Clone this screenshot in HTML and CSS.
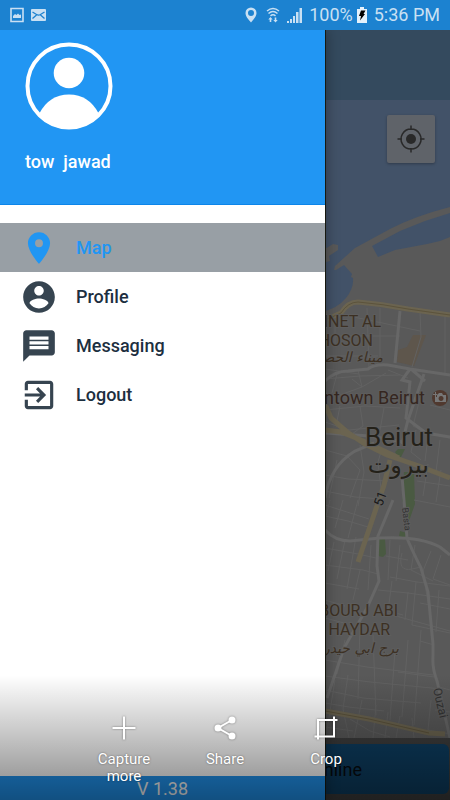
FILE: index.html
```
<!DOCTYPE html>
<html lang="en">
<head>
    <meta charset="UTF-8">
    <meta name="viewport" content="width=device-width, initial-scale=1.0">
    <title>Map</title>
    <link rel="stylesheet" href="styles.css">
</head>
<body>
    <header class="status-bar">
        <div class="status-group">
            <svg width="14" height="16" viewBox="0 0 14 16"><path fill="none" stroke="currentColor" stroke-width="1.6" d="M1 1.500h12v13H1z"/><path fill="currentColor" d="M3 11V9l2-2 1.500 1L8 6.500l1.500 1.500L11 7.500V11z"/></svg>
            <svg width="15" height="12" viewBox="0 0 15 12"><rect width="15" height="12" rx="1" fill="currentColor"/><path fill="none" stroke="#1c82d0" stroke-width="1.300" d="M1.500 3l4 2.500q2 1.200 4 0l4-2.500M1.500 9.500l4-3.500M13.500 9.500l-4-3.500"/></svg>
        </div>
        <div class="status-group">
            <svg width="12" height="16" viewBox="0 0 12 16"><path fill="currentColor" fill-rule="evenodd" d="M6 .5A5.500 5.500 0 0 0 .5 6c0 3.500 3 6.500 5.500 9.500C8.500 12.500 11.500 9.500 11.500 6A5.500 5.500 0 0 0 6 .5zM6 3a3 3 0 1 1 0 6 3 3 0 0 1 0-6z"/></svg>
            <svg class="wifi" width="14" height="16" viewBox="0 0 14 16"><path fill="none" stroke="currentColor" stroke-width="1.500" d="M1 4q6-5 12 0M2.500 6.500q4.500-4 9 0M4.500 8.800q2.500-2 5 0"/><path fill="currentColor" d="M4.500 10l2.200 2.500H5.300V15H3.700v-2.500H2.300zM9.500 15.500L7.300 13h1.400v-2.500h1.600V13h1.400z"/></svg>
            <svg width="15" height="16" viewBox="0 0 15 16"><path fill="currentColor" d="M0 14h2v2H0zM3 12h2v4H3zM6 9h2v7H6zM9 5h2.500v11H9zM12.500 1H15v15h-2.500z"/></svg>
            <span class="battery-level">100%</span>
            <svg width="10" height="16" viewBox="0 0 10 16"><path fill="#e4f1fb" d="M3 0h4v2h3v14H0V2h3z"/><path fill="#000" d="M4 3.500h4.500L6.500 7H8L3 13.500l1-4.500H2z"/></svg>
            <span class="clock">5:36 PM</span>
        </div>
    </header>

    <div class="screen">
        <main class="map-page">
            <div class="toolbar"></div>
            <div class="map">
                <svg class="map-canvas" viewBox="0 100 450 638" preserveAspectRatio="xMaxYMin slice">
                    <rect y="100" width="450" height="638" fill="#595959"/>
                    <!-- sea and harbour -->
                    <path fill="#425268" d="M0 100h450v107q-35 9-60 22l-35 19-20 18-1 4 2 0 8-5 8 9-1 3 2 1q1 10-7 20-9 11-25 14H0z"/>
                    <path fill="#425268" d="M372 246l28-15 25-10 25-8v24l-10 4-13 3-32 6-17 7z"/>
                    <path fill="#595959" d="M320 252l13-8 5 1v5l-9 6 1 5-4 1-6-6z"/>
                    <!-- parks and blocks -->
                    <path fill="#5e564c" d="M413 335h13l-12 31-17-4 1-12 9-3z"/>
                    <path fill="#4a5a42" d="M398 449h7l-5 10-5-7zM404 472h10l1 32-6 17-7-21zM378 539h7l1 15-3 3-5-1zM400 531l7 2-1 5-7-2z"/>
                    <!-- small streets -->
                    <g class="street">
                        <path d="M335 320v26M349 316l24 5 47 10M367 308l2 60M380 308v57M325 336h75M325 356h53M420 312l1 25-9 30M445 316v58M325 379l35-3 40-1"/>
                        <path d="M325 369l34 5M337 374l-5 19M352 379l10 8M358 370l4 17-22 8M362 387l24-14M388 370l20 8M325 410l40-4 35 2M340 406l-4 20 17 8M360 406l3 20-11 8M384 408l-4 22M420 398l-7 28 16 8 21 4M430 405l20 5"/>
                        <path d="M325 422l24 8 50-5M325 450l22 6 13 14-10 28M325 475l23 4 40 2M337 460l-8 38M360 445l4 27-6 34M382 448l-4 14 4 36M325 491l30 6 27 2M416 430l-5 22 10 8M428 437l-3 24M440 440l-4 32M417 481l33 5M428 464l-5 32M441 470l-5 32M414 500l36 7"/>
                        <path d="M325 516l23 5 20 6M330 500l-4 16M343 500l-8 28M358 500l-10 38M325 505l44 14M325 548l33 6 18 4M334 542l-6 29M345 540l-8 39M356 537l-9 52M325 565l38 5 15 4M325 583l34 6M360 570l-7 30M371 545l-3 45M390 540l-2 40M400 545l-4 36M386 556l22 4M390 577l27 5 33 4M402 553q-5 19 10 16l9-2M415 545l-4 25 22 11M431 551l-8 20 5 32M441 555l-8 24 17 6M378 590l30 3 42 6M392 581l-4 30 15 4M408 592l-3 28M416 582l-4 43 38 8M420 603l30 6M378 611l72 20M439 590l-3 42"/>
                        <path d="M325 600l20 6M325 618l19 5M345 640l-8 34M360 625l-2 74M373 635l3 80M395 650l-5 70M408 640l-6 77M421 630l-7 95M325 660l42 7 66 8M325 676l45 6 72 7M325 690l38 8 58 5M325 703l24 4 35 4M335 680l-8 50M348 675l-5 34 6 29M362 700l-8 38M376 705l-3 33M388 712l-3 26M400 716l-4 22M412 718l2 20M431 700l-3 30 22 4M439 687l11 3M435 710l15 2M420 641l14 4M398 672l36 5M325 727l28 4M350 719l20 12 20 6"/>
                    </g>
                    <!-- wider roads -->
                    <g class="road">
                        <path d="M400 311l-5 52M325 381q10-10 23-10l20-2q6-5 20-4l22 4 40 6M410 369l-8 11 8 2-4 36 20 15 24 4M411 369l14 12"/>
                        <path d="M424 374l-16 46-6 24M325 433l45 3 33 6M325 498q5-32 30-47l19-8M393 500l-15 36-1 30 2 15-12 27-23 40-17 50"/>
                        <path d="M402 476l5 62q3 8 14 30l7 24 5 52v12q-1 12 4 25l13 57"/>
                        <path d="M325 530q10 11 25 11l30-3q40-2 60 9l10 8"/>
                    </g>
                    <!-- highways -->
                    <g class="highway">
                        <path d="M325 320l16-7q7-11 17-11 25 2 50 7l42 6"/>
                        <path d="M325 404l6 14 16 14 18 12 22 11 32 11 31 12M325 430l16 2 20 8 38 18M390 460l-6 25-26 77"/>
                        <path d="M325 711l44 8 60 14 16 1"/>
                    </g>
                    <path class="highway-line" d="M325 320l16-7q7-11 17-11 25 2 50 7l42 6M325 711l44 8 60 14"/>
                    <!-- labels -->
                    <g class="area-label">
                        <text x="381" y="327">MINET AL</text>
                        <text x="373" y="346">HOSON</text>
                        <text class="arabic" x="383" y="362">ميناء الحصن</text>
                        <text x="398" y="616">BOURJ ABI</text>
                        <text x="390" y="635">HAYDAR</text>
                        <text class="arabic" x="399" y="653">برج ابي حيدر</text>
                    </g>
                    <text class="poi-label" x="425" y="404">Downtown Beirut</text>
                    <circle cx="440" cy="398" r="8" fill="#50392f"/>
                    <path fill="#777" fill-rule="evenodd" d="M437 395l2-2h3l1 2h3v7h-11v-5h2zM441 396a2.500 2.500 0 1 0 .1 0zM435 392h1v2h2v1h-2v2h-1v-2h-2v-1h2z"/>
                    <text class="city-label" x="433" y="446">Beirut</text>
                    <text class="city-label city-arabic" x="429" y="473">بيروت</text>
                    <text class="road-number" transform="translate(382 507) rotate(-70)">51</text>
                    <text class="street-label" transform="translate(402 508) rotate(83)">Basta</text>
                    <text class="street-label street-large" transform="translate(433 689) rotate(77)">Ouzai</text>
                </svg>
                <button class="locate-btn" aria-label="My location">
                    <svg width="28" height="28" viewBox="0 0 28 28"><circle cx="14" cy="14" r="5" fill="#292929"/><path fill="none" stroke="#292929" stroke-width="1.500" d="M14 4a10 10 0 1 0 .1 0M14 .5V5M14 23v4.500M.5 14H5M23 14h4.500"/></svg>
                </button>
            </div>
            <div class="online-bar">
                <button class="online-btn">Online</button>
            </div>
        </main>

        <aside class="drawer">
            <div class="profile">
                <svg class="avatar" viewBox="0 0 88 88">
                    <circle cx="44" cy="44" r="41.500" fill="none" stroke="#fff" stroke-width="4"/>
                    <circle cx="44" cy="31" r="15.300" fill="#fff"/>
                    <path fill="#fff" d="M14 72Q24 52.500 44 52.500T74 72Q62 87 44 87T14 72z"/>
                </svg>
                <div class="user-name">tow&nbsp; jawad</div>
            </div>
            <nav class="menu">
                <a class="menu-item active" href="#map">
                    <svg class="menu-icon" viewBox="0 0 24 24"><path d="M12 2C8.130 2 5 5.130 5 9c0 5.250 7 13 7 13s7-7.750 7-13c0-3.870-3.130-7-7-7zm0 9.500a2.500 2.500 0 1 1 0-5 2.500 2.500 0 0 1 0 5z"/></svg>
                    Map
                </a>
                <a class="menu-item" href="#profile">
                    <svg class="menu-icon" viewBox="0 0 24 24"><path d="M12 2C6.480 2 2 6.480 2 12s4.480 10 10 10 10-4.480 10-10S17.520 2 12 2zm0 3c1.660 0 3 1.340 3 3s-1.340 3-3 3-3-1.340-3-3 1.340-3 3-3zm0 14.200c-2.500 0-4.710-1.280-6-3.220.030-1.990 4-3.080 6-3.080 1.990 0 5.970 1.090 6 3.080-1.290 1.940-3.500 3.220-6 3.220z"/></svg>
                    Profile
                </a>
                <a class="menu-item" href="#messaging">
                    <svg class="menu-icon" viewBox="0 0 24 24"><path d="M20 2H4c-1.100 0-1.990.9-1.990 2L2 22l4-4h14c1.100 0 2-.9 2-2V4c0-1.100-.9-2-2-2zM6 9h12v2H6V9zm12 5H6v-2h12v2zm0-6H6V6h12v2z"/></svg>
                    Messaging
                </a>
                <a class="menu-item" href="#logout">
                    <svg class="menu-icon" viewBox="0 0 24 24"><path d="M10.090 15.590L11.500 17l5-5-5-5-1.410 1.410L12.670 11H3v2h9.670l-2.580 2.590zM19 3H5c-1.110 0-2 .9-2 2v4h2V5h14v14H5v-4H3v4c0 1.100.89 2 2 2h14c1.100 0 2-.9 2-2V5c0-1.100-.9-2-2-2z"/></svg>
                    Logout
                </a>
            </nav>
            <footer class="version">V 1.38</footer>
        </aside>

        <div class="capture-bar">
            <button class="capture-action">
                <svg width="26" height="26" viewBox="0 0 26 26"><path d="M13 1.500v23M1.500 13h23"/></svg>
                <span>Capture more</span>
            </button>
            <button class="capture-action">
                <svg width="26" height="26" viewBox="0 0 26 26"><path d="M20 5L6 13l14 8"/><g fill="#fff" stroke="none"><circle cx="20" cy="5" r="3.500"/><circle cx="6" cy="13" r="3.500"/><circle cx="20" cy="21" r="3.500"/></g></svg>
                <span>Share</span>
            </button>
            <button class="capture-action">
                <svg width="26" height="26" viewBox="0 0 26 26"><path d="M5 24.500V5h19.500M1.500 21.500H21V1.500"/></svg>
                <span>Crop</span>
            </button>
        </div>
    </div>
</body>
</html>
```
FILE: styles.css
```
* {
    box-sizing: border-box;
}
body {
    margin: 0;
    min-height: 100vh;
    display: flex;
    flex-direction: column;
    font-family: Roboto, sans-serif;
    background-color: #3d3d3d;
}
button {
    font-family: inherit;
    border: none;
    padding: 0;
    cursor: pointer;
}
svg {
    display: block;
    flex-shrink: 0;
}

/* status bar */
.status-bar {
    display: flex;
    justify-content: space-between;
    align-items: center;
    height: 30px;
    padding: 0 10px;
    background-color: #1c82d0;
    color: #c9e0f3;
}
.status-group {
    display: flex;
    align-items: center;
    gap: 7px;
}
.status-group .wifi {
    margin-left: 2px;
}
.battery-level,
.clock {
    font-size: 18px;
    line-height: 30px;
}
.battery-level {
    margin-right: -3px;
}

/* map page behind the drawer */
.screen {
    position: relative;
    flex: 1;
    display: flex;
    overflow: hidden;
}
.map-page {
    flex: 1;
    display: flex;
    flex-direction: column;
}
.toolbar {
    height: 70px;
    background-color: #344a5e;
}
.map {
    position: relative;
    flex: 1;
    overflow: hidden;
}
.map-canvas {
    position: absolute;
    width: 100%;
    height: 100%;
}
.street,
.road,
.highway,
.highway-line {
    fill: none;
    stroke: #626262;
    stroke-width: 1;
}
.road {
    stroke: #676767;
    stroke-width: 3;
}
.highway {
    stroke: #6b6450;
    stroke-width: 5;
}
.highway-line {
    stroke: #5c533b;
}
.map-canvas text {
    text-anchor: end;
    paint-order: stroke;
    stroke: #5d5d5d;
    stroke-width: 2px;
}
.area-label {
    font-size: 16px;
    fill: #3c3023;
}
.map-canvas .arabic {
    font-family: "DejaVu Sans", sans-serif;
    font-size: 14px;
    font-style: italic;
}
.poi-label {
    font-size: 18px;
    fill: #352620;
}
.city-label {
    font-size: 26px;
    fill: #242119;
}
.city-arabic {
    font-family: "DejaVu Sans", sans-serif;
    font-size: 24px;
}
.map-canvas .road-number,
.map-canvas .street-label {
    text-anchor: start;
    font-size: 13px;
    fill: #171717;
}
.map-canvas .street-label {
    font-size: 9px;
    fill: #333;
}
.map-canvas .street-large {
    font-size: 12px;
}
.locate-btn {
    position: absolute;
    top: 15px;
    right: 15px;
    display: flex;
    align-items: center;
    justify-content: center;
    width: 48px;
    height: 48px;
    border-radius: 2px;
    background-color: #5f6369;
    box-shadow: 0 1px 3px rgba(0, 0, 0, 0.3);
}
.online-bar {
    padding: 6px 1px;
    background-color: #3d3d3d;
}
.online-btn {
    width: 100%;
    height: 50px;
    padding-right: 87px;
    border-radius: 6px;
    background-color: #0d3d60;
    color: #060b10;
    font-size: 18px;
    text-align: right;
}

/* drawer */
.drawer {
    position: absolute;
    top: 0;
    bottom: 0;
    left: 0;
    width: 325px;
    max-width: 85%;
    display: flex;
    flex-direction: column;
    background-color: #fff;
    box-shadow: 1px 0 0 #16180f, 2px 0 12px rgba(0, 0, 0, 0.3);
}
.profile {
    height: 175px;
    padding: 12px 25px;
    background-color: #2196f3;
    border-bottom: 1px solid #0c85e9;
}
.avatar {
    width: 88px;
    height: 88px;
}
.user-name {
    margin-top: 20px;
    font-size: 18px;
    font-weight: 500;
    line-height: 24px;
    color: #fff;
}
.menu {
    flex: 1;
    display: flex;
    flex-direction: column;
    padding-top: 18px;
}
.menu-item {
    display: flex;
    align-items: center;
    gap: 18px;
    height: 49px;
    padding: 0 20px;
    font-size: 18px;
    font-weight: 500;
    color: #1c2f3f;
    text-decoration: none;
}
.menu-item.active {
    background-color: #989fa5;
    color: #2196f3;
}
.menu-icon {
    width: 38px;
    height: 38px;
    fill: #364450;
}
.active .menu-icon {
    fill: #2196f3;
}
.version {
    height: 24px;
    background-color: #2196f3;
    color: #fff;
    font-size: 18px;
    line-height: 26px;
    text-align: center;
}

/* screenshot actions */
.capture-bar {
    position: absolute;
    left: 0;
    right: 0;
    bottom: 0;
    height: 125px;
    padding-top: 40px;
    display: flex;
    align-items: flex-start;
    justify-content: center;
    background: linear-gradient(rgba(0, 0, 0, 0), rgba(0, 0, 0, 0.47));
}
.capture-action {
    display: flex;
    flex-direction: column;
    align-items: center;
    gap: 10px;
    width: 101px;
    padding: 0 20px;
    background: none;
    color: #fff;
    font-size: 15px;
    line-height: 17px;
    text-shadow: 0 0 2px rgba(0, 0, 0, 0.5);
}
.capture-action svg {
    fill: none;
    stroke: #fff;
    stroke-width: 2;
    filter: drop-shadow(0 0 1px rgba(0, 0, 0, 0.4));
}
```
